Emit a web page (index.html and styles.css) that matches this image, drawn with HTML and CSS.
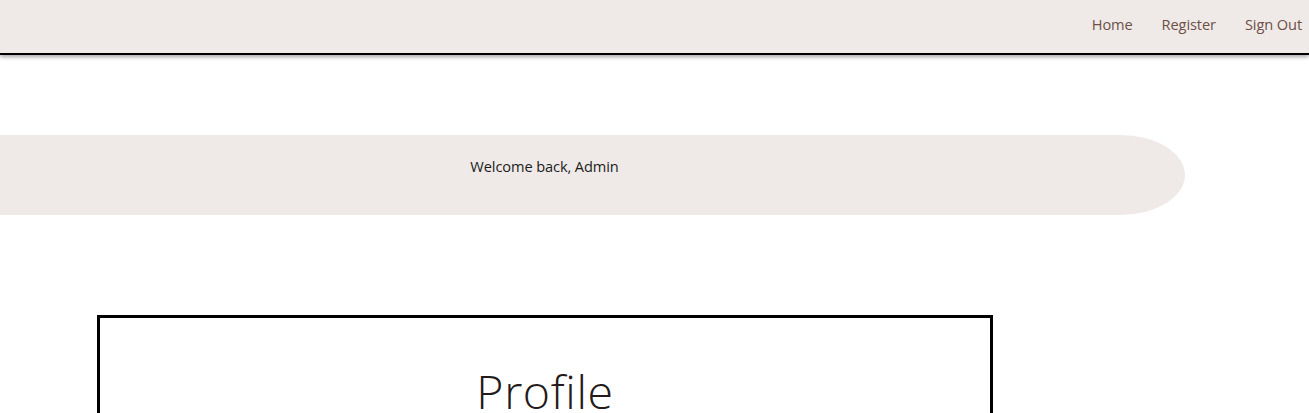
FILE: index.html
```html
<!DOCTYPE html>
<html lang="en">
<head>
<meta charset="utf-8">
<title>Profile</title>
<link rel="stylesheet" href="styles.css">
</head>
<body>
<header class="topbar">
  <nav class="nav">
    <a class="nav-link" href="#">Home</a>
    <a class="nav-link" href="#">Register</a>
    <a class="nav-link" href="#">Sign Out</a>
  </nav>
</header>
<main class="main">
  <div class="welcome">
    <span class="welcome-text">Welcome back, Admin</span>
  </div>
  <section class="card">
    <h1 class="card-title">Profile</h1>
  </section>
</main>
</body>
</html>
```

FILE: styles.css
```css
* { box-sizing: border-box; }
html, body { margin: 0; padding: 0; }
body {
  font-family: "Open Sans", "Noto Sans", "Liberation Sans", sans-serif;
  background: #ffffff;
  color: #1f1a1a;
  overflow: hidden;
}
.topbar {
  height: 55px;
  background: #efeae7;
  border-bottom: 2px solid #000;
  box-shadow: 0 2px 4px rgba(0, 0, 0, 0.35);
  display: flex;
  justify-content: flex-end;
  align-items: center;
  padding-right: 7px;
}
.nav {
  display: flex;
  gap: 29px;
  margin-top: -5px;
}
.nav-link {
  color: #6c4f47;
  text-decoration: none;
  font-size: 14.6px;
  letter-spacing: -0.1px;
}
.main {
  padding-top: 80px;
}
.welcome {
  width: 1185px;
  height: 80px;
  background: #efeae7;
  border-radius: 0 65px 65px 0 / 0 40px 40px 0;
  display: flex;
  justify-content: center;
  align-items: center;
  padding-right: 96px;
  padding-bottom: 19px;
}
.welcome-text {
  font-size: 14.6px;
  color: #1c1c1c;
  letter-spacing: -0.1px;
}
.card {
  margin: 100px 0 0 97px;
  width: 896px;
  height: 200px;
  border: 3px solid #000;
  display: flex;
  flex-direction: column;
  align-items: center;
}
.card-title {
  margin: 41px 0 0 0;
  font-size: 46.5px;
  font-weight: 300;
  color: #241a1a;
  letter-spacing: 0.6px;
}
```
